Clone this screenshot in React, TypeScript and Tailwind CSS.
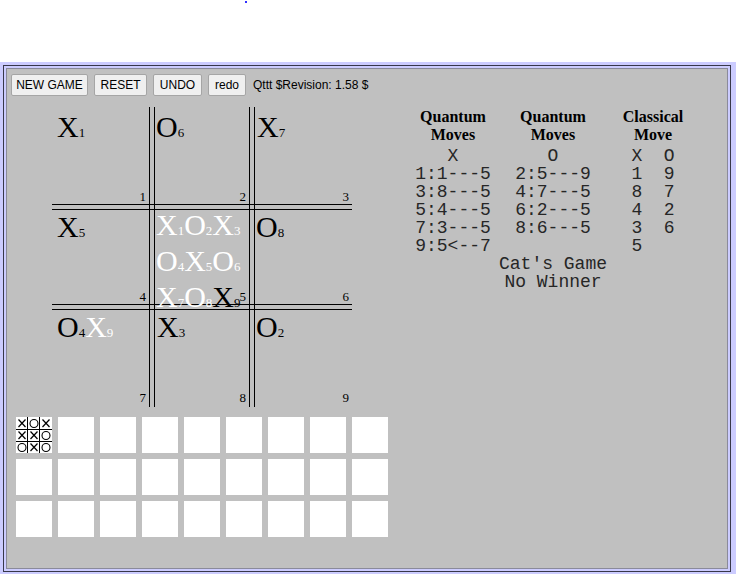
import React from 'react'

type Mark = [string, string, boolean?]

const serif = { fontFamily: '"Liberation Serif", "Times New Roman", serif' }
const mono = { fontFamily: '"Liberation Mono", "Courier New", monospace' }

function Marks({ lines }: { lines: Mark[][] }) {
  return (
    <>
      {lines.map((line, i) => (
        <div key={i} className="leading-[30px] whitespace-nowrap">
          {line.map(([l, n, white], j) => (
            <span key={j} className={white ? 'text-white' : 'text-black'}>
              <span className="text-[30px]">{l}</span>
              <span className="text-[13px]">{n}</span>
            </span>
          ))}
        </div>
      ))}
    </>
  )
}

const cells: { lines: Mark[][]; pad: string; num: string; numPos: string }[] = [
  { lines: [[['X', '1']]], pad: 'pl-[5px] pt-[5px]', num: '1', numPos: 'bottom-[1px]' },
  { lines: [[['O', '6']]], pad: 'pl-[1px] pt-[5px]', num: '2', numPos: 'bottom-[1px]' },
  { lines: [[['X', '7']]], pad: 'pl-[2px] pt-[5px]', num: '3', numPos: 'bottom-[1px]' },
  { lines: [[['X', '5']]], pad: 'pl-[5px] pt-[2px]', num: '4', numPos: 'bottom-[1px]' },
  {
    lines: [
      [['X', '1', true], ['O', '2', true], ['X', '3', true]],
      [['O', '4', true], ['X', '5', true], ['O', '6', true]],
      [['X', '7', true], ['O', '8', true], ['X', '9']],
    ],
    pad: 'pl-[1px] pt-0',
    num: '5',
    numPos: 'bottom-[1px]',
  },
  { lines: [[['O', '8']]], pad: 'pl-[1px] pt-[2px]', num: '6', numPos: 'bottom-[1px]' },
  { lines: [[['O', '4'], ['X', '9', true]]], pad: 'pl-[5px] pt-[2px]', num: '7', numPos: 'bottom-[3px]' },
  { lines: [[['X', '3']]], pad: 'pl-[2px] pt-[2px]', num: '8', numPos: 'bottom-[3px]' },
  { lines: [[['O', '2']]], pad: 'pl-[1px] pt-[2px]', num: '9', numPos: 'bottom-[3px]' },
]

function Board() {
  const out: React.ReactNode[] = []
  for (let r = 0; r < 5; r++) {
    for (let c = 0; c < 5; c++) {
      const key = `${r}-${c}`
      if (r % 2 === 0 && c % 2 === 0) {
        const cell = cells[(r / 2) * 3 + c / 2]
        out.push(
          <div key={key} className={`relative ${cell.pad}`}>
            <Marks lines={cell.lines} />
            <span className={`absolute right-[3px] text-[13px] leading-none text-black ${cell.numPos}`}>
              {cell.num}
            </span>
          </div>
        )
      } else if (r % 2 === 0) {
        out.push(<div key={key} className="border-x border-black" />)
      } else if (c % 2 === 0) {
        out.push(<div key={key} className="border-y border-black" />)
      } else {
        out.push(<div key={key} className="border border-black" />)
      }
    }
  }
  return (
    <div
      className="grid grid-cols-[97px_6px_94px_6px_97px] grid-rows-[97px_6px_94px_6px_97px] w-[300px]"
      style={serif}
    >
      {out}
    </div>
  )
}

function MiniBoard() {
  const marks = ['X', 'O', 'X', 'X', 'X', 'O', 'O', 'X', 'O']
  return (
    <svg width="36" height="36" viewBox="0 0 36 36" shapeRendering="crispEdges">
      <line x1="11.5" y1="0" x2="11.5" y2="36" stroke="black" />
      <line x1="23.5" y1="0" x2="23.5" y2="36" stroke="black" />
      <line x1="0" y1="12.5" x2="36" y2="12.5" stroke="black" />
      <line x1="0" y1="24.5" x2="36" y2="24.5" stroke="black" />
      {marks.map((m, i) => {
        const x = (i % 3) * 12
        const y = Math.floor(i / 3) * 12
        return m === 'X' ? (
          <g key={i} stroke="black" strokeWidth="1.2" shapeRendering="auto">
            <line x1={x + 2.5} y1={y + 2.5} x2={x + 9.5} y2={y + 10} />
            <line x1={x + 9.5} y1={y + 2.5} x2={x + 2.5} y2={y + 10} />
          </g>
        ) : (
          <circle key={i} cx={x + 6} cy={y + 6.5} r="4" fill="none" stroke="black" strokeWidth="1.1" shapeRendering="auto" />
        )
      })}
    </svg>
  )
}

const col1 = ['X', '1:1---5', '3:8---5', '5:4---5', '7:3---5', '9:5<--7']
const col2 = ['O', '2:5---9', '4:7---5', '6:2---5', '8:6---5', '\u00a0']
const col3 = ['X  O', '1  9', '8  7', '4  2', '3  6', '5   ']

function MoveColumn({ title, rows }: { title: [string, string]; rows: string[] }) {
  return (
    <div className="w-[100px] flex flex-col items-center">
      <div className="font-bold text-[16px] leading-[18px] text-center text-black" style={serif}>
        <div>{title[0]}</div>
        <div>{title[1]}</div>
      </div>
      <div className="mt-[3px] text-[18px] leading-[18px] text-[#262626] whitespace-pre text-center" style={mono}>
        {rows.map((r, i) => (
          <div key={i}>{r}</div>
        ))}
      </div>
    </div>
  )
}

export default function App() {
  const btn =
    'h-[22px] border border-[#a5a5a5] bg-[#efefef] rounded-[2px] text-[12px] text-black flex items-center justify-center'
  return (
    <div className="bg-white w-[736px] h-[574px]" style={{ fontFamily: '"Liberation Sans", Arial, sans-serif' }}>
      <div className="h-[62px] pt-[1px]">
        <div className="ml-[245px] w-[2px] h-[2px] bg-[#3030ff]" />
      </div>
      <div className="bg-[#ccccff] h-[512px] pl-[3px] pt-[3px] pr-[5px] pb-[2px]">
        <div className="h-full border border-[#38384a] p-[2px]">
          <div className="h-full border border-[#8a8a9a] bg-[#c0c0c0] pt-[5px] pl-[4px]">
            {/* toolbar */}
            <div className="flex items-center gap-[6px]">
              <button className={`${btn} w-[77px]`}>NEW GAME</button>
              <button className={`${btn} w-[53px]`}>RESET</button>
              <button className={`${btn} w-[49px]`}>UNDO</button>
              <button className={`${btn} w-[38px]`}>redo</button>
              <span className="ml-[1px] text-[12px] text-black">Qttt $Revision: 1.58 $</span>
            </div>

            {/* board + move list */}
            <div className="flex mt-[11px] ml-[41px]">
              <Board />
              <div className="ml-[51px] flex flex-col items-center">
                <div className="flex pt-[1px]">
                  <MoveColumn title={['Quantum', 'Moves']} rows={col1} />
                  <MoveColumn title={['Quantum', 'Moves']} rows={col2} />
                  <MoveColumn title={['Classical', 'Move']} rows={col3} />
                </div>
                <div className="text-[18px] leading-[18px] text-[#262626] text-center" style={mono}>
                  <div>Cat's Game</div>
                  <div>No Winner</div>
                </div>
              </div>
            </div>

            {/* history thumbnails */}
            <div className="mt-[10px] ml-[5px] grid grid-cols-[repeat(9,36px)] gap-[6px]">
              {Array.from({ length: 27 }).map((_, i) => (
                <div key={i} className="w-[36px] h-[36px] bg-white">
                  {i === 0 && <MiniBoard />}
                </div>
              ))}
            </div>
          </div>
        </div>
      </div>
    </div>
  )
}
